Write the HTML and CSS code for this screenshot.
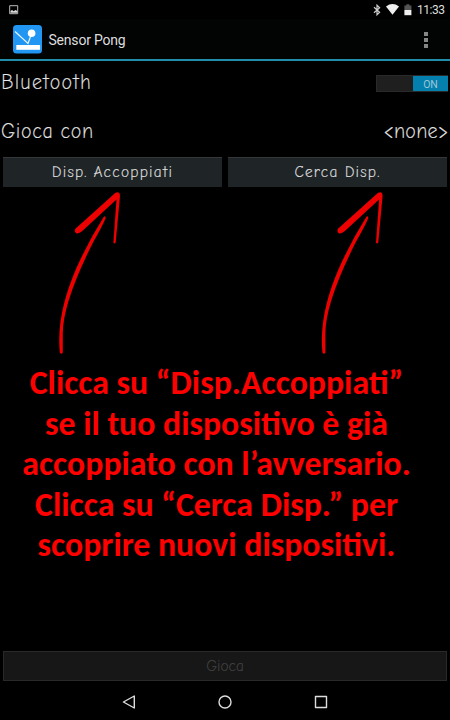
FILE: index.html
```html
<!DOCTYPE html>
<html lang="it">
<head>
<meta charset="utf-8">
<title>Sensor Pong</title>
<link rel="stylesheet" href="styles.css">
</head>
<body>
<div class="screen">
  <div class="status">
    <svg class="picture" width="10" height="10" viewBox="0 0 10 10"><path d="M.7.7h8v8h-8z" fill="none" stroke="#bbb"/><path d="M1.5 7.7V6L3 5l1.7 1.3L6.5 5l1.7 1v1.7z" fill="#ddd"/></svg>
    <div class="status-icons">
      <svg width="8" height="12" viewBox="0 0 8 12"><path d="M1 3.3l5.6 5L4 10.8V1.2l2.6 2.5L1 8.7" fill="none" stroke="#ccc" stroke-width="1.2"/></svg>
      <svg class="wifi" width="13" height="11" viewBox="0 0 13 11"><path d="M0 2.5Q6.5-2.3 13 2.5L6.5 10.7z" fill="#eee"/></svg>
      <svg class="battery" width="8" height="12" viewBox="0 0 8 12"><path d="M.4 1.4h2V.3h3v1.1h2V6h-7z" fill="#555"/><path d="M.4 6h7v5.2h-7z" fill="#eee"/></svg>
      <span class="clock">11:33</span>
    </div>
  </div>
  <header class="bar">
    <svg class="logo" width="30" height="30" viewBox="0 0 30 30"><rect x="0" y="0" width="29" height="28.6" rx="3.5" fill="#2196f3"/><path d="M2 6.5l13 12 3.3-9" fill="none" stroke="#e8f4ff" stroke-width="1.2"/><circle cx="18.6" cy="8.3" r="3.8" fill="#fff"/><path d="M3.3 20h23.8v4.8H3.3z" fill="#fff"/></svg>
    <h1>Sensor Pong</h1>
    <div class="more"><i></i><i></i><i></i></div>
  </header>
  <main>
    <div class="row bluetooth"><span class="hand bt">Bluetooth</span><div class="switch"><span>ON</span></div></div>
    <div class="row opponent"><span class="hand gc">Gioca con</span><span class="hand none">&lt;none&gt;</span></div>
    <div class="buttons"><button class="paired">Disp. Accoppiati</button><button class="search">Cerca Disp.</button></div>
    <div class="arrows">
      <svg viewBox="0 0 225 170"><g fill="#ec0000"><path d="M75.4 37.8L115.5 1.7Q120-.2 120 5L115.7 51.5Q114.4 53.5 113.4 51.5L116.5 8.5 82 40.3Q79 43 76 42.2 74 40.5 75.4 37.8z"/><path d="M103.5 26.3Q105.5 24 105.7 27 102 36 93.5 50.5 62 113 62.8 144V161.5Q61.5 164 59.8 161.5C57 132 65 104 76 78Q88 51 103.5 26.3z"/></g></svg>
      <svg viewBox="0 0 225 170"><g transform="translate(37.6 0)" fill="#ec0000"><path d="M75.4 37.8L115.5 1.7Q120-.2 120 5L115.7 51.5Q114.4 53.5 113.4 51.5L116.5 8.5 82 40.3Q79 43 76 42.2 74 40.5 75.4 37.8z"/><path d="M103.5 26.3Q105.5 24 105.7 27 102 36 93.5 50.5 62 113 62.8 144V161.5Q61.5 164 59.8 161.5C57 132 65 104 76 78Q88 51 103.5 26.3z"/></g></svg>
    </div>
    <p class="help"><span>Clicca su “Disp.Accoppiati”</span><span>se il tuo dispositivo è già</span><span>accoppiato con l’avversario.</span><span>Clicca su “Cerca Disp.” per</span><span>scoprire nuovi dispositivi.</span></p>
  </main>
  <button class="play" disabled>Gioca</button>
  <nav>
    <svg viewBox="0 0 14 14"><path d="M12.3 1v12L1.4 7z"/></svg>
    <svg viewBox="0 0 14 14"><circle cx="7" cy="7" r="6"/></svg>
    <svg viewBox="0 0 14 14"><rect x="1.5" y="1.5" width="11" height="11"/></svg>
  </nav>
</div>
</body>
</html>
```
FILE: styles.css
```css
* { box-sizing: border-box; }
body { margin: 0; background: #000; color: #ddd; font-family: Roboto, sans-serif; }
.screen { width: 450px; height: 720px; display: flex; flex-direction: column; overflow: hidden; }
svg { display: block; flex: none; }
.status { height: 19px; display: flex; justify-content: space-between; padding: 4px 6px 0 9px; }
.picture { margin-top: 1px; }
.status-icons { display: flex; align-items: flex-start; }
.wifi { margin-left: 5px; }
.battery { margin-left: 5px; }
.clock { font-size: 12px; line-height: 12px; margin-left: 5px; width: 27px; letter-spacing: -.45px; white-space: nowrap; }
.bar { height: 42px; display: flex; align-items: center; background: #020303; border-bottom: 2px solid #218eab; padding: 0 22px 0 13px; }
.logo { margin-top: 2px; }
h1 { flex: 1; margin: 2px 0 0 5.5px; font-size: 14px; line-height: 18px; font-weight: 400; letter-spacing: -.2px; }
.more { display: grid; gap: 2px; margin-top: 1px; }
.more i { width: 4px; height: 4px; background: #858585; }
main { flex: 1; }
.row { display: flex; justify-content: space-between; }
.bluetooth { height: 45px; padding: 6px 2px 0 1px; }
.opponent { height: 51px; padding: 10px 1px 0 1px; }
.hand, button { font-family: "Comic Neue", "Patrick Hand", Lato, sans-serif; font-weight: 300; -webkit-text-stroke: .2px currentColor; }
.hand { font-size: 23px; line-height: 30px; color: #e8e8e8; white-space: nowrap; transform: scaleX(.85); transform-origin: left; }
.bt { letter-spacing: 1.5px; }
.gc { letter-spacing: .8px; }
.none { letter-spacing: .3px; transform-origin: right; }
.switch { width: 72px; height: 17px; margin-top: 8px; background: #1f1f1f; border: 1px solid #292929; border-right: 0; display: flex; justify-content: flex-end; }
.switch span { width: 35px; background: #057fae; color: #9bc7d8; font-size: 10.5px; line-height: 17px; text-align: center; }
.buttons { display: grid; grid-template-columns: 1fr 1fr; gap: 6px; padding: 0 3px; }
button { padding: 0; border: 0; color: #e2e2e2; background: #1f2427; font-size: 15px; }
.buttons button { height: 30px; border-top: 1px solid #34383b; line-height: 27px; }
.paired, .search { letter-spacing: 1.25px; }
.arrows { display: flex; height: 170px; margin-top: 4px; }
.arrows svg { width: 225px; height: 170px; }
.help { margin: 2px 0 0; height: 204px; color: #f00; font-family: Carlito, Lato, sans-serif; font-weight: 700; font-size: 33.8px; line-height: 40.6px; }
.help span { display: block; width: 450px; white-space: nowrap; text-align: center; padding-right: 17px; }
.play { flex: none; height: 30px; margin: 0 3px 5px; border: 1px solid #292929; background: #171717; color: #444; letter-spacing: 0; line-height: 26px; }
nav { height: 34px; display: flex; justify-content: center; gap: 82px; padding-top: 9px; }
nav svg { width: 14px; height: 14px; fill: none; stroke: #ddd; stroke-width: 1.4; stroke-linejoin: round; }
```
